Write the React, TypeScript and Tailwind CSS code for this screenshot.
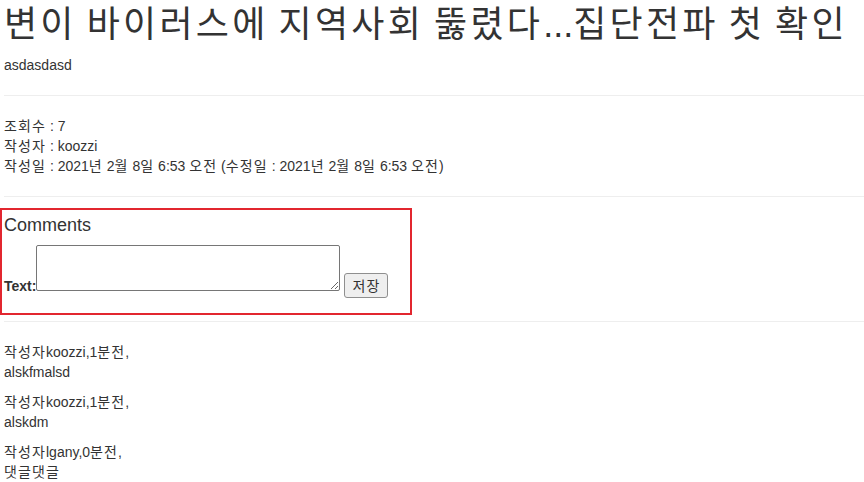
import { Fragment } from 'react';

const font = { fontFamily: '"Liberation Sans", "Noto Sans CJK KR", sans-serif' };

// Hangul in the original font is a bit wider than Noto CJK, so widen those runs
function Ko({ children, wide }: { children: string; wide?: boolean }) {
  const parts = children.split(/([\uAC00-\uD7A3]+)/);
  return (
    <>
      {parts.map((p, i) =>
        /[\uAC00-\uD7A3]/.test(p) ? (
          <span key={i} className={wide ? 'tracking-[0.09em]' : 'tracking-[0.08em]'}>
            {p}
          </span>
        ) : (
          <Fragment key={i}>{p}</Fragment>
        )
      )}
    </>
  );
}

const comments = [
  { author: 'koozzi', ago: '1분전', text: 'alskfmalsd' },
  { author: 'koozzi', ago: '1분전', text: 'alskdm' },
  { author: 'lgany', ago: '0분전', text: '댓글댓글' },
];

export default function App() {
  return (
    <div
      className="min-h-screen bg-white pl-[4px] text-[14px] leading-[20px] text-[#333]"
      style={font}
    >
      <h1 className="pt-[5px] text-[36px] leading-[40px] font-normal whitespace-nowrap">
        <Ko wide>변이 바이러스에 지역사회 뚫렸다...집단전파 첫 확인</Ko>
      </h1>
      <p className="mt-[10px]">asdasdasd</p>

      <hr className="mt-[20px] mb-[20px] border-t border-[#eee]" />

      <div>
        <p>
          <Ko>조회수 : 7</Ko>
        </p>
        <p>
          <Ko>작성자 : koozzi</Ko>
        </p>
        <p>
          <Ko>작성일 : 2021년 2월 8일 6:53 오전 (수정일 : 2021년 2월 8일 6:53 오전)</Ko>
        </p>
      </div>

      <hr className="mt-[20px] border-t border-[#eee]" />

      <div className="-ml-[4px] mt-[11px] w-[412px] border-2 border-[#e2262f] pl-[2px] pt-[5px] pb-[15px]">
        <div className="text-[18px] leading-[20px]">Comments</div>
        <form className="mt-[10px] flex items-end" onSubmit={(e) => e.preventDefault()}>
          <label className="mb-[2px] font-bold">Text:</label>
          <textarea className="mb-[7px] h-[46px] w-[304px] rounded-[2px] border border-[#767676] bg-white" />
          <button
            type="button"
            className="ml-[4px] h-[25px] w-[44px] rounded-[3px] border border-[#8f8f8f] bg-[#efefef] text-[14px] leading-[20px] text-[#333]"
          >
            <Ko>저장</Ko>
          </button>
        </form>
      </div>

      <hr className="mt-[6px] mb-[20px] border-t border-[#eee]" />

      <div className="flex flex-col gap-[10px]">
        {comments.map((c, i) => (
          <div key={i}>
            <p>
              <Ko>{`작성자${c.author},${c.ago},`}</Ko>
            </p>
            <p>
              <Ko>{c.text}</Ko>
            </p>
          </div>
        ))}
      </div>
    </div>
  );
}
